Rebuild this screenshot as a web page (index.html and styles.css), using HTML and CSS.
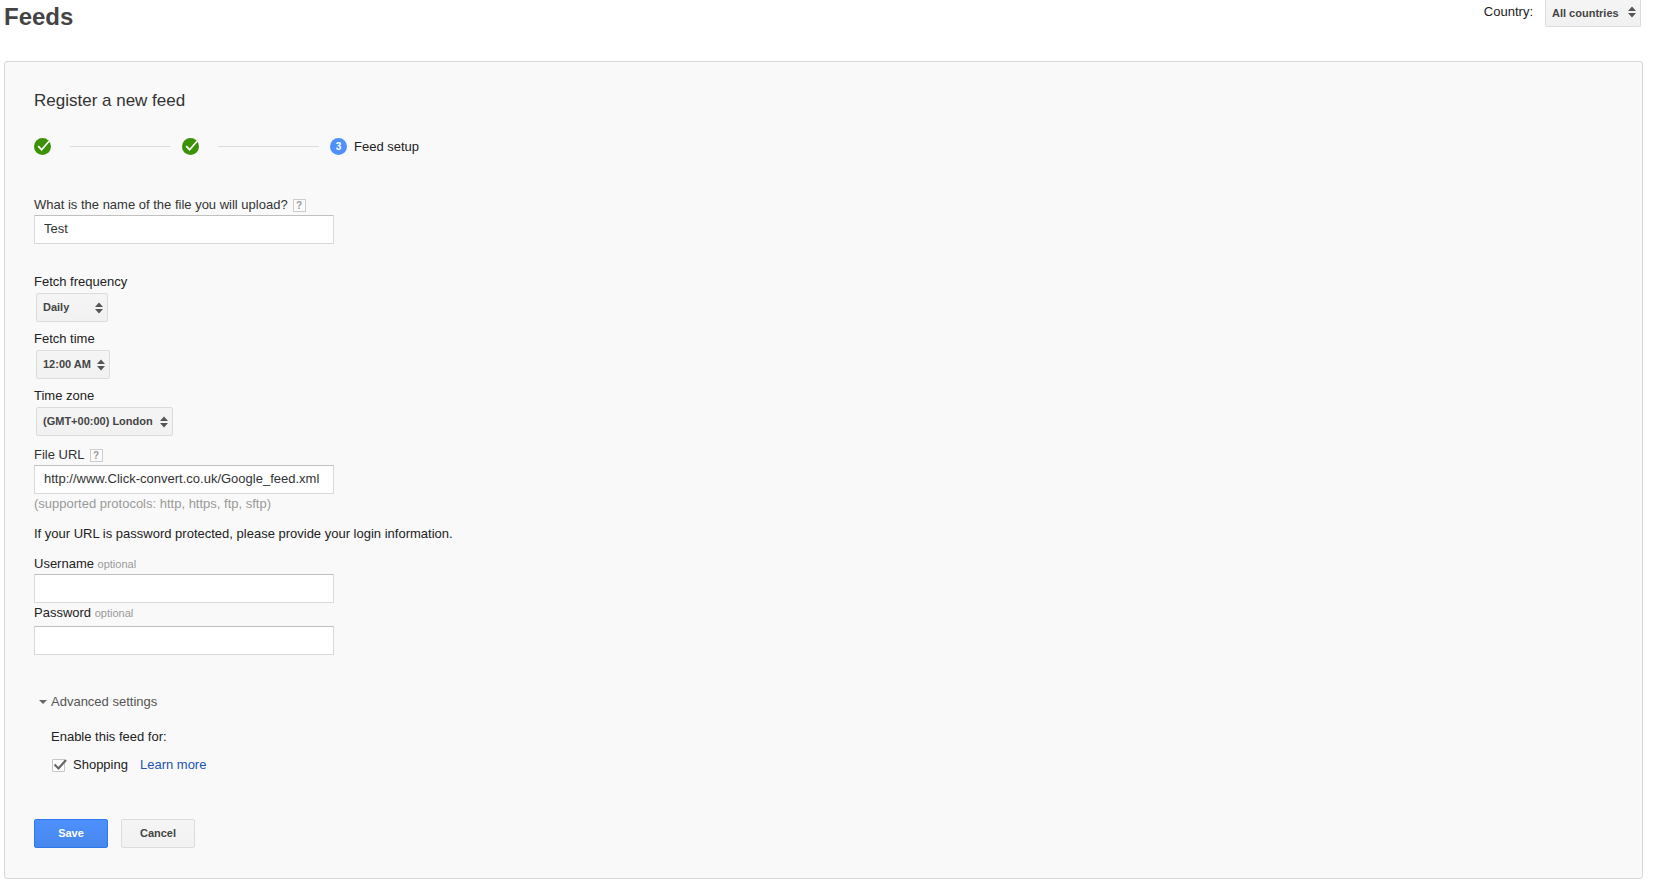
FILE: index.html
```html
<!DOCTYPE html>
<html lang="en">
<head>
<meta charset="utf-8">
<title>Feeds</title>
<link rel="stylesheet" href="styles.css">
</head>
<body>
<header class="page-header">
  <h1 class="page-title">Feeds</h1>
  <div class="country">
    <label for="country">Country:</label>
    <span class="select-box select-top">
      <select id="country" class="select"><option>All countries</option></select>
      <svg class="arrows" viewBox="0 0 8 12" aria-hidden="true"><path d="M4 0.500 8 5H0zM4 11.500 8 7H0z"/></svg>
    </span>
  </div>
</header>
<main class="panel">
  <h2 class="panel-title">Register a new feed</h2>
  <ol class="steps">
    <li class="step"><svg class="step-icon" viewBox="0 0 17 17" role="img" aria-label="Done"><circle cx="8.500" cy="8.500" r="8.500" fill="#3c9206"/><path d="M4.200 8.200 7.600 11.700 15 3.200" fill="none" stroke="#fff" stroke-width="1.700"/></svg></li>
    <li class="step"><svg class="step-icon" viewBox="0 0 17 17" role="img" aria-label="Done"><circle cx="8.500" cy="8.500" r="8.500" fill="#3c9206"/><path d="M4.200 8.200 7.600 11.700 15 3.200" fill="none" stroke="#fff" stroke-width="1.700"/></svg></li>
    <li class="step step-current"><span class="step-number">3</span>Feed setup</li>
  </ol>
  <form class="form">
    <div class="field field-name">
      <div class="label-row"><label for="filename">What is the name of the file you will upload?</label><button type="button" class="help" aria-label="Help">?</button></div>
      <input id="filename" class="text-input" type="text" value="Test">
    </div>
    <div class="schedule">
      <div class="field field-select">
        <label for="frequency">Fetch frequency</label>
        <span class="select-box select-frequency">
          <select id="frequency" class="select"><option>Daily</option></select>
          <svg class="arrows" viewBox="0 0 8 12" aria-hidden="true"><path d="M4 0.500 8 5H0zM4 11.500 8 7H0z"/></svg>
        </span>
      </div>
      <div class="field field-select">
        <label for="time">Fetch time</label>
        <span class="select-box select-time">
          <select id="time" class="select"><option>12:00 AM</option></select>
          <svg class="arrows" viewBox="0 0 8 12" aria-hidden="true"><path d="M4 0.500 8 5H0zM4 11.500 8 7H0z"/></svg>
        </span>
      </div>
      <div class="field field-select">
        <label for="zone">Time zone</label>
        <span class="select-box select-zone">
          <select id="zone" class="select"><option>(GMT+00:00) London</option></select>
          <svg class="arrows" viewBox="0 0 8 12" aria-hidden="true"><path d="M4 0.500 8 5H0zM4 11.500 8 7H0z"/></svg>
        </span>
      </div>
    </div>
    <div class="field field-url">
      <div class="label-row"><label for="url">File URL</label><button type="button" class="help" aria-label="Help">?</button></div>
      <input id="url" class="text-input" type="text" value="http://www.Click-convert.co.uk/Google_feed.xml">
      <span class="hint">(supported protocols: http, https, ftp, sftp)</span>
    </div>
    <p class="note">If your URL is password protected, please provide your login information.</p>
    <div class="field">
      <label for="username">Username <span class="optional">optional</span></label>
      <input id="username" class="text-input" type="text">
    </div>
    <div class="field field-password">
      <label for="password">Password <span class="optional">optional</span></label>
      <input id="password" class="text-input" type="password">
    </div>
    <details class="advanced" open>
      <summary class="advanced-title"><svg class="caret" viewBox="0 0 8 4" aria-hidden="true"><path d="M0 0h8L4 4z"/></svg>Advanced settings</summary>
      <div class="advanced-body">
        <p class="enable">Enable this feed for:</p>
        <div class="destination">
          <span class="check-box">
            <input id="shopping" class="check" type="checkbox" checked>
            <svg class="check-mark" viewBox="0 0 15 13" aria-hidden="true"><path d="M1.500 5.500 5.500 9.500 13 1" fill="none" stroke="#666" stroke-width="2.200"/></svg>
          </span>
          <label for="shopping">Shopping</label>
          <a class="learn" href="#">Learn more</a>
        </div>
      </div>
    </details>
    <div class="actions">
      <button type="submit" class="button button-save">Save</button>
      <button type="button" class="button">Cancel</button>
    </div>
  </form>
</main>
</body>
</html>
```
FILE: styles.css
```css
* { box-sizing: border-box; }
body {
  margin: 0;
  background: #fff;
  color: #222;
  font: 13px/16px "Liberation Sans", Arial, sans-serif;
}
h1, h2, p, ol { margin: 0; padding: 0; }
.page-header {
  display: flex;
  justify-content: space-between;
  align-items: flex-start;
  height: 61px;
  padding: 0 15px 0 4px;
}
.page-title {
  padding-top: 3px;
  color: #444;
  font-size: 24px;
  line-height: 28px;
}
.country { display: flex; gap: 12px; }
.country label { padding-top: 4px; }
.panel {
  margin: 0 13px 12px 4px;
  padding: 29px 29px 30px;
  border: 1px solid #d8d8d8;
  border-radius: 3px;
  background: #f9f9f9;
}
.panel-title {
  color: #333;
  font-size: 17px;
  font-weight: normal;
  line-height: 20px;
}
.steps {
  display: flex;
  margin-top: 27px;
  list-style: none;
}
.step {
  display: flex;
  align-items: center;
  width: 148px;
  height: 17px;
}
.step:not(.step-current)::after {
  content: "";
  width: 101px;
  height: 1px;
  margin-left: 19px;
  background: #ddd;
}
.step-icon { width: 17px; height: 17px; }
.step-number {
  width: 17px;
  height: 17px;
  margin-right: 7px;
  border-radius: 50%;
  background: #4d90fe;
  color: #fff;
  font-size: 10px;
  font-weight: bold;
  line-height: 17px;
  text-align: center;
}
.form {
  display: flex;
  flex-direction: column;
  align-items: flex-start;
  margin-top: 42px;
}
.field {
  display: flex;
  flex-direction: column;
  align-items: flex-start;
  gap: 2px;
}
.field-name { margin-bottom: 30px; }
.label-row { display: flex; color: #333; }
.help {
  width: 13px;
  height: 13px;
  margin: 2px 0 0 5px;
  padding: 0;
  border: 1px solid #ccc;
  background: #fcfcfc;
  color: #999;
  font: bold 10px/11px "Liberation Sans", Arial, sans-serif;
}
.text-input {
  width: 300px;
  height: 29px;
  padding: 0 9px 2px;
  border: 1px solid #d9d9d9;
  border-top-color: #c0c0c0;
  border-radius: 1px;
  background: #fff;
  color: #333;
  font: inherit;
}
.schedule {
  display: flex;
  flex-direction: column;
  gap: 9px;
}
.field-select { gap: 3px; }
.select-box { position: relative; display: flex; }
.field-select .select-box { margin-left: 2px; }
.select {
  width: 100%;
  height: 29px;
  padding: 0 16px 0 6px;
  border: 1px solid #dcdcdc;
  border-radius: 2px;
  appearance: none;
  background: linear-gradient(#f5f5f5, #f1f1f1);
  color: #444;
  font: bold 11px/27px "Liberation Sans", Arial, sans-serif;
}
.select-frequency { width: 72px; }
.select-time { width: 74px; }
.select-zone { width: 137px; }
.select-top { width: 96px; }
.select-top .select {
  height: 27px;
  padding-bottom: 4px;
  border-top: 0;
  border-radius: 0 0 2px 2px;
}
.arrows {
  position: absolute;
  top: 9px;
  right: 5px;
  width: 8px;
  height: 12px;
  fill: #555;
  pointer-events: none;
}
.select-top .arrows { top: 6px; }
.field-url { margin-top: 11px; }
.hint { color: #999; }
.note { margin: 14px 0; }
.optional { color: #999; font-size: 11px; line-height: 12px; }
.field-password { gap: 5px; margin-top: 2px; }
.advanced { margin-top: 39px; }
.advanced-title {
  display: flex;
  align-items: center;
  gap: 4px;
  padding-left: 5px;
  color: #555;
  list-style: none;
}
.caret { width: 8px; height: 4px; fill: #666; }
.advanced-body { padding: 19px 0 0 17px; }
.destination { display: flex; margin-top: 12px; }
.check-box {
  position: relative;
  width: 15px;
  height: 13px;
  margin: 2px 6px 0 1px;
}
.check {
  display: block;
  width: 13px;
  height: 13px;
  margin: 0;
  border: 1px solid #c6c6c6;
  border-radius: 1px;
  appearance: none;
  background: #fff;
}
.check-mark {
  position: absolute;
  top: 0;
  left: 1px;
  width: 15px;
  height: 13px;
  pointer-events: none;
}
.learn { margin-left: 12px; color: #2252b4; text-decoration: none; }
.actions { display: flex; gap: 13px; margin-top: 46px; }
.button {
  width: 74px;
  height: 29px;
  padding: 0;
  border: 1px solid #dcdcdc;
  border-radius: 2px;
  background: linear-gradient(#f5f5f5, #f1f1f1);
  color: #444;
  font: bold 11px/27px "Liberation Sans", Arial, sans-serif;
}
.button-save {
  border-color: #3079ed;
  background: linear-gradient(#4d90fe, #4787ed);
  color: #fff;
}
```
